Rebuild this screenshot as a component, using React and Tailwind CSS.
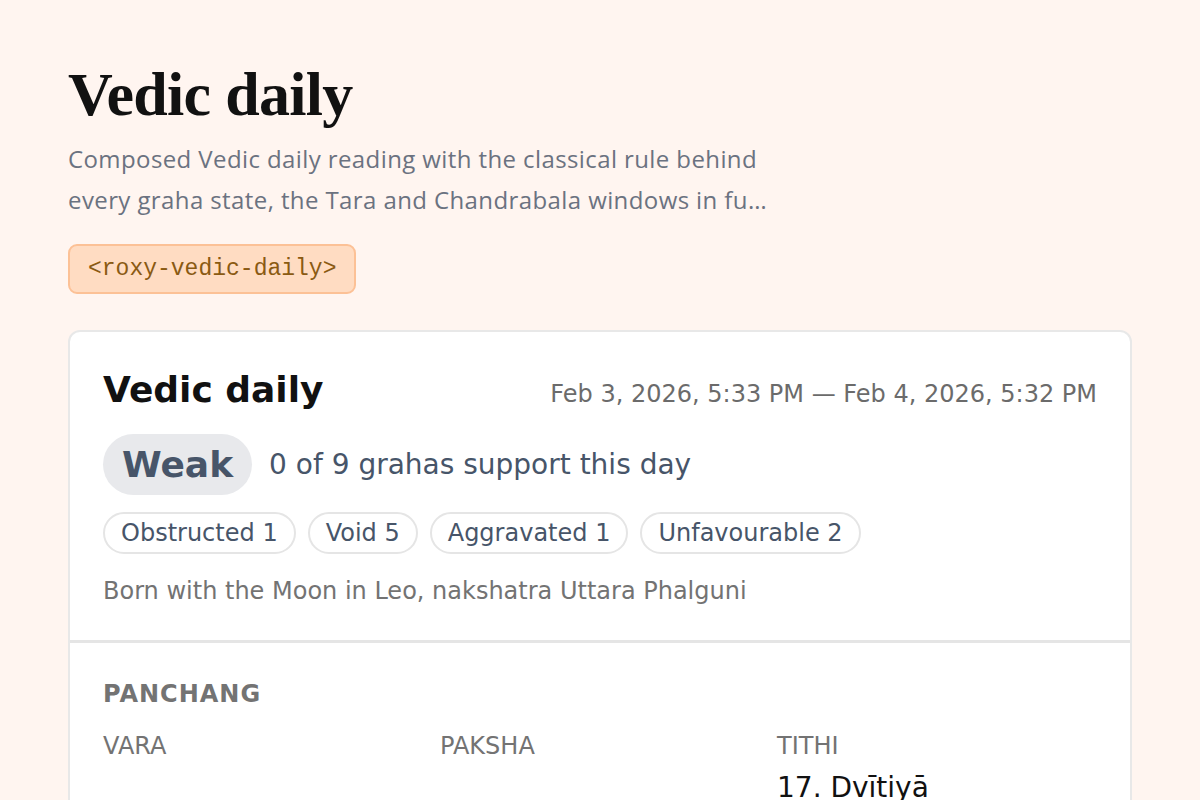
const sans = { fontFamily: '"DejaVu Sans", sans-serif' };

const chips = [
  ["Obstructed", 1],
  ["Void", 5],
  ["Aggravated", 1],
  ["Unfavourable", 2],
];

function PanchangCol({ label, value }) {
  return (
    <div className="flex flex-col">
      <span className="text-[24px] leading-[32px] uppercase text-[#737373]">{label}</span>
      <span className="mt-[10px] text-[28px] leading-[32px] text-[#111]">{value}</span>
    </div>
  );
}

export default function App() {
  return (
    <div className="h-[800px] overflow-hidden bg-[#fff5f0] px-[68px] pt-[58px]">
      <h1
        className="text-[62px] leading-[72px] font-bold text-[#111] tracking-[-0.7px]"
        style={{ fontFamily: '"Liberation Serif", "DejaVu Serif", serif' }}
      >
        Vedic daily
      </h1>
      <p
        className="mt-[8px] text-[24px] leading-[41px] text-[#6b7280] tracking-[0.4px]"
        style={{ fontFamily: '"Open Sans", Lato, sans-serif' }}
      >
        Composed Vedic daily reading with the classical rule behind
        <br />
        every graha state, the Tara and Chandrabala windows in fu…
      </p>
      <div
        className="mt-[24px] inline-flex items-center h-[50px] px-[18px] rounded-[9px] bg-[#ffdcc2] border-2 border-[#fcc196] text-[#8a5a12] text-[23px]"
        style={{ fontFamily: '"Liberation Mono", monospace' }}
      >
        &lt;roxy-vedic-daily&gt;
      </div>

      <div className="mt-[36px] bg-white border-2 border-[#e8e8e8] rounded-[12px]" style={sans}>
        <div className="px-[33px] pt-[36px] pb-[34px] border-b-[3px] border-[#e5e5e5]">
          <div className="flex items-baseline justify-between">
            <h2 className="text-[36px] leading-[44px] font-bold text-[#111]">Vedic daily</h2>
            <span className="text-[24px] text-[#6b6b6b]">Feb 3, 2026, 5:33 PM — Feb 4, 2026, 5:32 PM</span>
          </div>
          <div className="mt-[22px] flex items-center gap-[17px]">
            <span className="inline-flex items-center h-[61px] px-[19px] rounded-full bg-[#e8e9ec] text-[36px] font-bold text-[#475569]">
              Weak
            </span>
            <span className="text-[28px] text-[#475569]">0 of 9 grahas support this day</span>
          </div>
          <div className="mt-[17px] flex gap-[12px]">
            {chips.map(([name, n]) => (
              <span
                key={name}
                className="inline-flex items-center h-[42px] px-[16px] rounded-full border-2 border-[#e5e5e5] text-[24px] text-[#475569]"
              >
                {name} {n}
              </span>
            ))}
          </div>
          <p className="mt-[22px] text-[24px] leading-[30px] text-[#737373]">
            Born with the Moon in Leo, nakshatra Uttara Phalguni
          </p>
        </div>
        <div className="px-[33px] pt-[36px] pb-[40px]">
          <h3 className="text-[24px] leading-[30px] font-bold tracking-[1px] uppercase text-[#737373]">Panchang</h3>
          <div className="mt-[21px] grid grid-cols-3 gap-x-[17px]">
            <PanchangCol label="Vara" value="" />
            <PanchangCol label="Paksha" value="" />
            <PanchangCol label="Tithi" value="17. Dvītiyā" />
          </div>
        </div>
      </div>
    </div>
  );
}
